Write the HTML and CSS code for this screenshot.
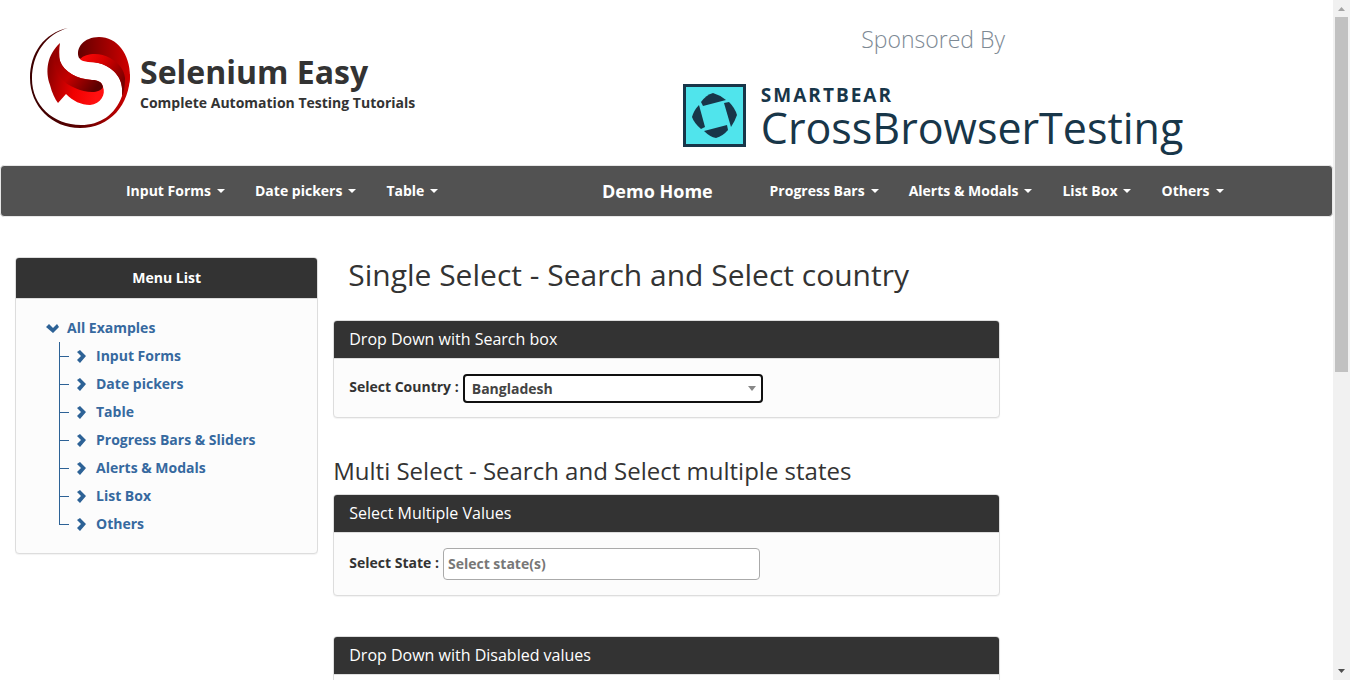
FILE: index.html
```html
<!DOCTYPE html>
<html lang="en">
<head>
<meta charset="utf-8">
<title>Selenium Easy - Select Dropdown</title>
<link rel="stylesheet" href="styles.css">
</head>
<body>
<div class="viewport">
<div class="page">
  <header class="masthead">
    <a class="brand" href="#">
      <svg class="brand-logo" viewBox="0 0 100 100" aria-hidden="true">
        <defs>
          <linearGradient id="ring" x1="0" y1="0.5" x2="1" y2="0.4"><stop offset="0" stop-color="#3a0000"/><stop offset="0.45" stop-color="#5c0000"/><stop offset="0.75" stop-color="#a80000"/><stop offset="1" stop-color="#d00000"/></linearGradient>
          <linearGradient id="top" x1="0" y1="0" x2="1" y2="0"><stop offset="0" stop-color="#640000"/><stop offset="1" stop-color="#cf0000"/></linearGradient>
          <linearGradient id="fold" x1="0" y1="0" x2="1" y2="0.6"><stop offset="0" stop-color="#ff0a0a"/><stop offset="0.45" stop-color="#d80000"/><stop offset="1" stop-color="#780000"/></linearGradient>
          <linearGradient id="low" x1="0" y1="0" x2="1" y2="0.2"><stop offset="0" stop-color="#7a0000"/><stop offset="0.6" stop-color="#f00000"/><stop offset="1" stop-color="#ff1010"/></linearGradient>
          <linearGradient id="inner" x1="0" y1="0" x2="1" y2="0.7"><stop offset="0" stop-color="#8a0000"/><stop offset="0.5" stop-color="#c40000"/><stop offset="1" stop-color="#5c0000"/></linearGradient>
        </defs>
        <path fill="url(#ring)" d="M38 0C14 5 0 25 0 50C0 78 22 100 50 100C80 100 100 77 100 46L92 50C94 55 94 62 92 68C85 87 70 97 51 97C23 97 2 77 2 51C2 26 16 6 38 0Z"/>
        <path fill="url(#top)" d="M49 30C45 20 54 9 69 9C87 9 100 26 100 48C100 56 97 64 92 68C94 50 84 41 72 36C62 33 53 34 49 30Z"/>
        <path fill="url(#fold)" d="M50 31C56 25 70 24 80 30C90 36 94 42 95 50C95 58 94 64 92 68C94 50 84 41 72 36C62 33 53 35 50 31Z"/>
        <path fill="url(#low)" d="M30 15C17 27 15 43 20 57C22 65 25 71 28 75L36 66C43 73 51 77 60 77C71 76 76 66 73 59C72 54 68 52 62 52C47 51 34 44 30 33C29 27 29 21 30 15Z"/>
        <path fill="url(#inner)" d="M27 20C22 40 28 53 45 60C56 65 70 66 73 59C72 54 68 52 62 52C47 51 34 44 30 33C28 28 28 24 27 20Z"/>
      </svg>
      <span class="brand-text">
        <span class="brand-name">Selenium Easy</span>
        <span class="brand-tag">Complete Automation Testing Tutorials</span>
      </span>
    </a>
    <div class="sponsor">
      <div class="sponsor-title">Sponsored By</div>
      <a class="sponsor-link" href="#">
        <svg class="sponsor-logo" viewBox="0 0 63 63" aria-hidden="true">
          <path fill="#183649" d="M0 0H63V63H0Z"/>
          <path fill="#50e4ec" d="M3 3H60V60H3Z"/>
          <g fill="#183649">
            <path d="M18 18Q23 11 30 9Q37 11 43 16L20 22Z"/>
            <path d="M41 19L46 18Q52 24 54 31Q52 37 48 43Z"/>
            <path d="M44 41L45 46Q40 52 33 54Q27 53 21 47Z"/>
            <path d="M16 21L22 43L18 45Q11 39 9 33Q11 26 16 21Z"/>
          </g>
        </svg>
        <span class="sponsor-text">
          <span class="sponsor-maker">SMARTBEAR</span>
          <span class="sponsor-name">CrossBrowserTesting</span>
        </span>
      </a>
    </div>
  </header>

  <nav class="navbar">
    <ul class="nav-list">
      <li><a class="nav-link caret" href="#">Input Forms</a></li>
      <li><a class="nav-link caret" href="#">Date pickers</a></li>
      <li><a class="nav-link caret" href="#">Table</a></li>
    </ul>
    <a class="nav-home" href="#">Demo Home</a>
    <ul class="nav-list nav-end">
      <li><a class="nav-link caret" href="#">Progress Bars</a></li>
      <li><a class="nav-link caret" href="#">Alerts &amp; Modals</a></li>
      <li><a class="nav-link caret" href="#">List Box</a></li>
      <li><a class="nav-link caret" href="#">Others</a></li>
    </ul>
  </nav>

  <div class="columns">
    <aside class="panel side">
      <div class="side-heading">Menu List</div>
      <div class="tree">
        <svg class="defs" aria-hidden="true"><symbol id="chevron" viewBox="0 0 13 13"><path fill="currentColor" d="M2 2L5 0L11 6L5 13L2 10L6 6Z"/></symbol></svg>
        <a class="tree-link" href="#"><svg class="chev down"><use href="#chevron"/></svg>All Examples</a>
        <ul class="tree-list">
          <li><a class="tree-link" href="#"><svg class="chev"><use href="#chevron"/></svg>Input Forms</a></li>
          <li><a class="tree-link" href="#"><svg class="chev"><use href="#chevron"/></svg>Date pickers</a></li>
          <li><a class="tree-link" href="#"><svg class="chev"><use href="#chevron"/></svg>Table</a></li>
          <li><a class="tree-link" href="#"><svg class="chev"><use href="#chevron"/></svg>Progress Bars &amp; Sliders</a></li>
          <li><a class="tree-link" href="#"><svg class="chev"><use href="#chevron"/></svg>Alerts &amp; Modals</a></li>
          <li><a class="tree-link" href="#"><svg class="chev"><use href="#chevron"/></svg>List Box</a></li>
          <li><a class="tree-link" href="#"><svg class="chev"><use href="#chevron"/></svg>Others</a></li>
        </ul>
      </div>
    </aside>

    <main class="main">
      <h1 class="title">Single Select - Search and Select country</h1>
      <section class="panel">
        <div class="panel-heading">Drop Down with Search box</div>
        <div class="panel-body">
          <label for="country">Select Country :</label>
          <span class="select-wrap">
            <select id="country" class="country">
              <option>Australia</option>
              <option selected>Bangladesh</option>
              <option>Denmark</option>
              <option>India</option>
            </select>
          </span>
        </div>
      </section>
      <h2 class="subtitle">Multi Select - Search and Select multiple states</h2>
      <section class="panel">
        <div class="panel-heading">Select Multiple Values</div>
        <div class="panel-body">
          <label for="state">Select State :</label>
          <input id="state" class="state" type="text" placeholder="Select state(s)">
        </div>
      </section>
      <section class="panel">
        <div class="panel-heading">Drop Down with Disabled values</div>
        <div class="panel-body"></div>
      </section>
    </main>
  </div>
</div>
<div class="scrollbar" aria-hidden="true">
  <svg class="scroll-arrow" viewBox="0 0 17 17"><path fill="#a3a3a3" d="M5 11L8.500 7L12 11Z"/></svg>
  <div class="scroll-track"><div class="scroll-thumb"></div></div>
  <svg class="scroll-arrow" viewBox="0 0 17 17"><path fill="#505050" d="M5 6L8.500 10L12 6Z"/></svg>
</div>
</div>
</body>
</html>
```
FILE: styles.css
```css
* { box-sizing: border-box; }

body {
  margin: 0;
  background: #fff;
  color: #333;
  font: 700 14px/20px "Open Sans", sans-serif;
}

a { color: inherit; text-decoration: none; }
ul { margin: 0; padding: 0; list-style: none; }

.viewport { display: flex; height: 100vh; overflow: hidden; }
.page { flex: 1; min-width: 0; overflow: hidden; }

/* Header */
.masthead {
  display: grid;
  grid-template-columns: 50% 40%;
  height: 165px;
}
.brand { display: flex; padding: 28px 0 0 30px; gap: 10px; }
.brand-logo { width: 100px; height: 100px; }
.brand-text { display: flex; flex-direction: column; padding-top: 22px; }
.brand-name { font-size: 32px; line-height: 43px; }

.sponsor { display: flex; flex-direction: column; align-items: center; padding-top: 22px; }
.sponsor-title { color: #7d8994; font-size: 23px; line-height: 34px; font-weight: 300; }
.sponsor-link { display: flex; gap: 15px; padding-top: 28px; color: #183649; }
.sponsor-logo { width: 63px; height: 63px; }
.sponsor-text { display: flex; flex-direction: column; }
.sponsor-maker { font-size: 19px; line-height: 22px; letter-spacing: 2px; }
.sponsor-name { font-size: 43px; line-height: 44px; font-weight: 400; }

/* Navigation */
.navbar {
  display: grid;
  grid-template-columns: 39% 11.5% 1fr;
  align-items: center;
  height: 52px;
  padding-left: 8.25%;
  border: 1px solid #e7e7e7;
  border-radius: 4px;
  background: #525252;
  color: #fff;
}
.nav-list { display: flex; }
.nav-end { margin-left: 27px; }
.nav-link { display: flex; align-items: center; gap: 6px; padding: 15px; white-space: nowrap; }
.caret::after {
  content: "";
  border: 4px solid transparent;
  border-top-color: #fff;
  border-bottom: 0;
}
.nav-home { font-size: 18px; text-align: center; white-space: nowrap; }

/* Page columns */
.columns {
  display: grid;
  grid-template-columns: 3fr 6fr 3fr;
  align-items: start;
  padding-top: 40px;
}
.panel {
  border: 1px solid #ddd;
  border-radius: 4px;
  background: #fcfcfc;
  box-shadow: 0 1px 1px rgba(0, 0, 0, 0.05);
  overflow: hidden;
}
.side { margin: 0 15px; }
.side-heading {
  padding: 10px 15px;
  border-bottom: 1px solid #ddd;
  background: #333;
  color: #fff;
  text-align: center;
}

.tree { padding: 15px 28px; color: #36699f; }
.defs { display: none; }
.tree-link { display: flex; align-items: center; gap: 8px; height: 28px; }
.chev { width: 13px; height: 13px; margin-left: 2px; color: #2d6296; }
.down { transform: rotate(90deg); }
.tree-list { margin-left: 15px; }
.tree-list li {
  display: flex;
  align-items: center;
  gap: 4px;
  background: linear-gradient(#2d6296, #2d6296) 0 0 / 1px 100% no-repeat;
}
.tree-list li:last-child { background-size: 1px 50%; }
.tree-list li::before { content: ""; width: 10px; height: 1px; background: #2d6296; }

.title { margin: 0 0 28px; padding: 0 15px; font-size: 30px; line-height: 35px; font-weight: 400; }
.subtitle { margin: 0 0 10px; font-size: 24px; line-height: 26px; font-weight: 400; }
.main .panel { margin-bottom: 40px; }
.panel-heading {
  padding: 8px 15px 9px;
  border-bottom: 1px solid #ddd;
  background: #333;
  color: #fff;
  font-size: 16px;
  font-weight: 400;
}
.panel-body { display: flex; align-items: center; gap: 4px; padding: 15px; }
.panel-body label { padding-bottom: 2px; }

.select-wrap { position: relative; display: flex; height: 28px; }
.select-wrap::after {
  content: "";
  position: absolute;
  top: 12px;
  right: 7px;
  border: 4px solid transparent;
  border-top: 5px solid #888;
  border-bottom: 0;
  pointer-events: none;
}
.country {
  width: 300px;
  height: 29px;
  padding: 0 7px;
  border: 2px solid #101010;
  border-radius: 4px;
  appearance: none;
  background: #fff;
  color: #444;
  font: inherit;
}
.state {
  width: 317px;
  height: 32px;
  padding: 0 4px 2px;
  border: 1px solid #aaa;
  border-radius: 4px;
  background: #fff;
  font: inherit;
}
.state::placeholder { color: #777; }

/* Window scrollbar */
.scrollbar { display: flex; flex-direction: column; width: 17px; background: #f1f1f1; }
.scroll-arrow { width: 17px; height: 17px; }
.scroll-track { flex: 1; padding: 0 2px; }
.scroll-thumb { height: 55%; background: #c1c1c1; }
```
